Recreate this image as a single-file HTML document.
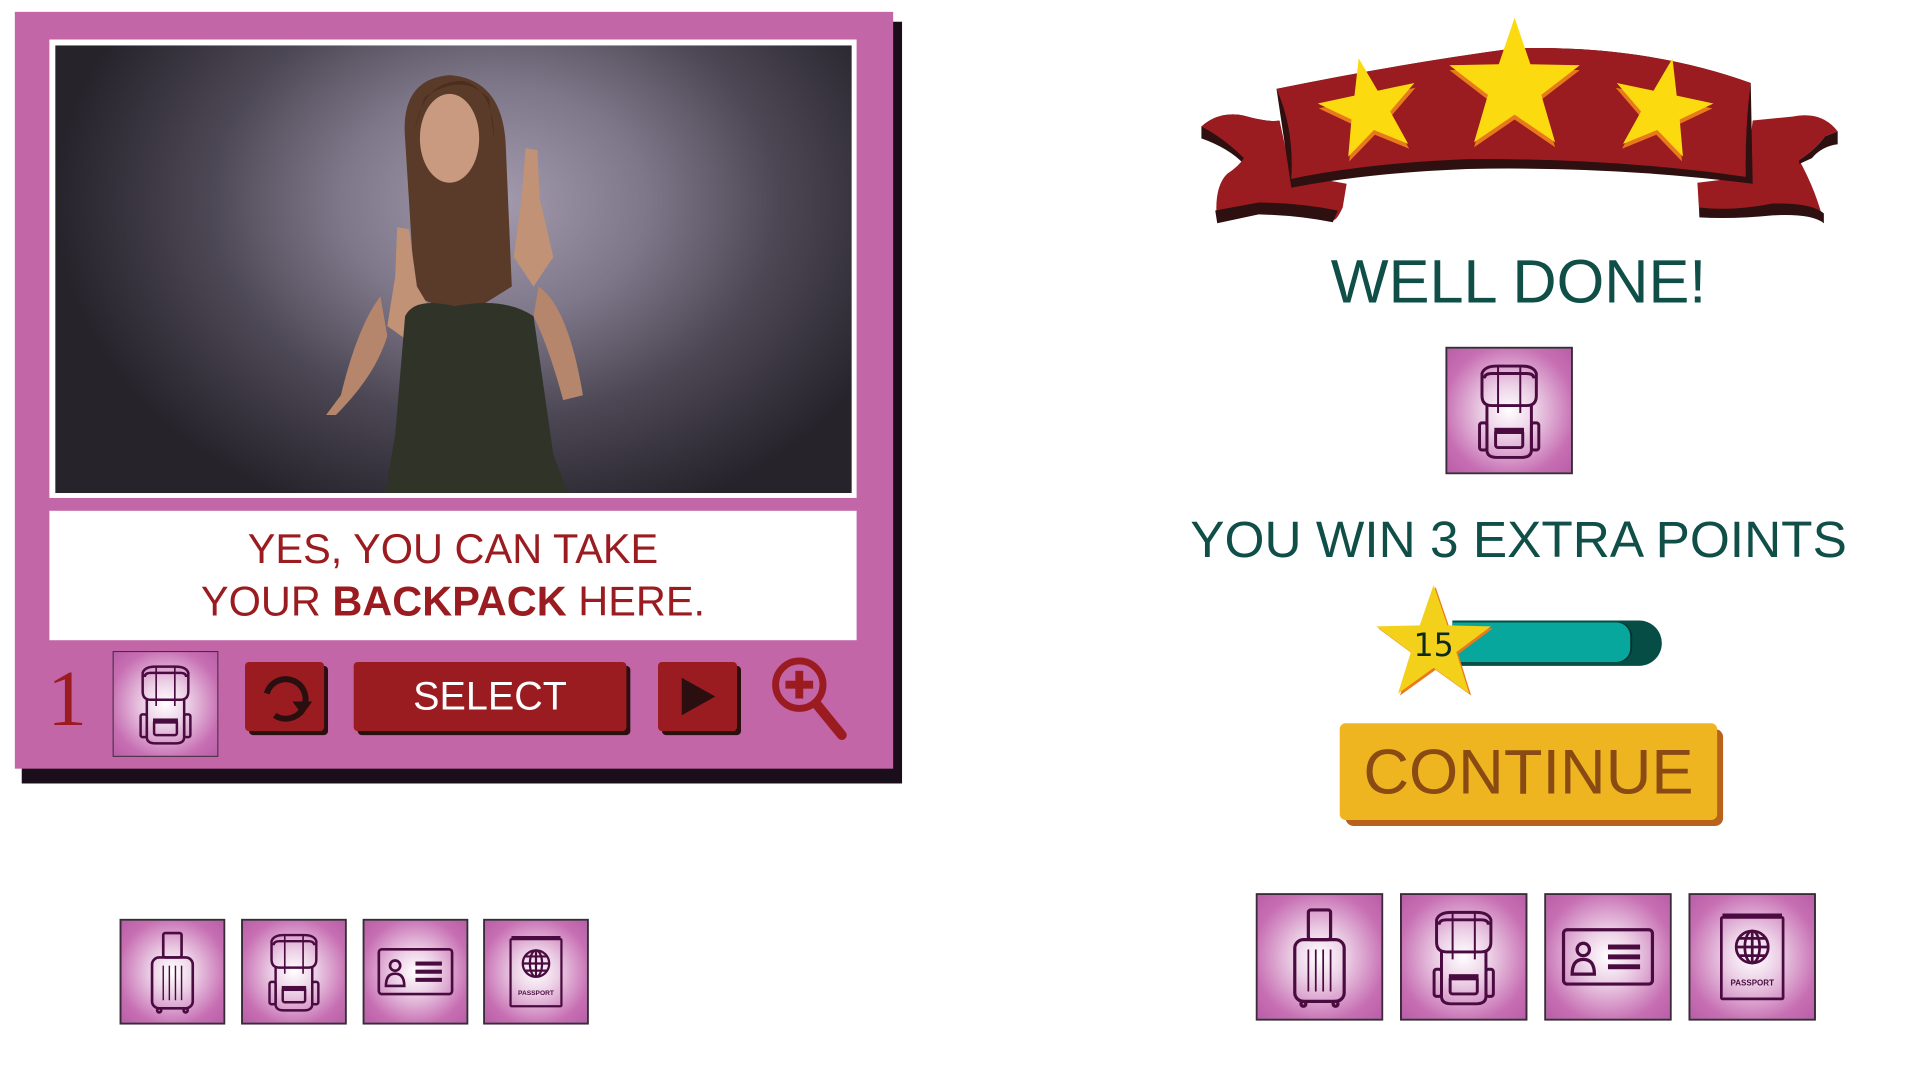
<!DOCTYPE html>
<html><head><meta charset="utf-8">
<style>
*{margin:0;padding:0;box-sizing:border-box}
html,body{width:1920px;height:1080px;overflow:hidden;background:#fff;font-family:"Liberation Sans","DejaVu Sans",sans-serif}
#w{position:absolute;left:0;top:0;width:1920px;height:1080px;transform:scale(0.988);transform-origin:0 0}
.abs{position:absolute}
.tile{position:absolute;background:radial-gradient(ellipse at 50% 50%,#ffffff 0%,#ecd0e6 30%,#c76fb3 75%,#b95ea8 100%);border:2px solid #3a2a3a}
.tile svg{width:100%;height:100%;display:block}
.btn{position:absolute;background:#9b1c20;border-radius:4px;box-shadow:4px 4px 0 #2b0f10}
</style></head><body>
<svg width="0" height="0" style="position:absolute">
<defs>
<symbol id="bag" viewBox="0 0 100 100">
 <g fill="none" stroke="#4a0c40" stroke-width="2.6">
 <rect x="41" y="12" width="18" height="24" rx="2"/>
 <rect x="30" y="36" width="40" height="50" rx="7"/>
 <line x1="41" y1="44" x2="41" y2="78" stroke-width="1.4"/><line x1="47" y1="44" x2="47" y2="78" stroke-width="1.4"/><line x1="53" y1="44" x2="53" y2="78" stroke-width="1.4"/><line x1="59" y1="44" x2="59" y2="78" stroke-width="1.4"/>
 <circle cx="37" cy="88" r="2"/><circle cx="63" cy="88" r="2"/></g>
</symbol>
<symbol id="pack" viewBox="0 0 100 100">
 <g fill="none" stroke="#4a0c40" stroke-width="2.4">
 <path d="M28 20 Q30 14 40 14 L60 14 Q70 14 72 20 L72 38 Q72 46 64 46 L36 46 Q28 46 28 38 Z"/>
 <path d="M30 24 Q30 20 36 20 L64 20 Q70 20 70 24"/>
 <path d="M32 46 L32 82 Q32 88 40 88 L60 88 Q68 88 68 82 L68 46"/>
 <rect x="26" y="60" width="6" height="22" rx="2"/><rect x="68" y="60" width="6" height="22" rx="2"/>
 <line x1="41" y1="14" x2="41" y2="52" stroke-width="1.6"/><line x1="59" y1="14" x2="59" y2="52" stroke-width="1.6"/>
 <rect x="39" y="66" width="22" height="14" rx="2"/></g>
 <rect x="38" y="64" width="24" height="5" fill="#4a0c40"/>
</symbol>
<symbol id="id" viewBox="0 0 100 100">
 <g fill="none" stroke="#4a0c40" stroke-width="2.6">
 <rect x="14" y="28" width="72" height="44" rx="3"/>
 <circle cx="30" cy="44" r="5"/><path d="M21 64 Q21 52 30 52 Q39 52 39 64 Z"/></g>
 <rect x="50" y="40" width="26" height="4" fill="#4a0c40"/><rect x="50" y="48" width="26" height="4" fill="#4a0c40"/><rect x="50" y="56" width="26" height="4" fill="#4a0c40"/>
</symbol>
<symbol id="pass" viewBox="0 0 100 100">
 <g fill="none" stroke="#4a0c40" stroke-width="2.2">
 <rect x="25" y="18" width="50" height="66" rx="1"/>
 <path d="M27 18 L27 16 L73 16 L73 18"/>
 <circle cx="50" cy="42" r="13"/><ellipse cx="50" cy="42" rx="6" ry="13"/><line x1="37" y1="42" x2="63" y2="42"/><line x1="39" y1="35" x2="61" y2="35"/><line x1="39" y1="49" x2="61" y2="49"/><line x1="50" y1="29" x2="50" y2="55"/></g>
 <text x="50" y="73" font-size="6.5" font-weight="bold" text-anchor="middle" fill="#4a0c40" font-family="Liberation Sans">PASSPORT</text>
</symbol>
</defs></svg>
<div id="w">
<div class="abs" style="left:22px;top:22px;width:891px;height:771px;background:#1a0e1a"></div>
<div class="abs" style="left:15px;top:12px;width:889px;height:766px;background:#c266a8"></div>
<div class="abs" style="left:50px;top:40px;width:817px;height:464px;background:#fff"></div>
<div class="abs" style="left:56px;top:46px;width:806px;height:453px;overflow:hidden;background:radial-gradient(ellipse 55% 75% at 55% 35%,#a49cae 0%,#7e7789 35%,#4c4754 65%,#26232b 100%)">
<svg width="806" height="453" viewBox="56 46 806 453">
 <path d="M410 140 Q405 80 455 76 Q510 80 512 150 L518 290 L470 320 L420 300 Z" fill="#5a3a28"/>
 <ellipse cx="455" cy="140" rx="30" ry="45" fill="#c99a80"/>
 <path d="M420 130 Q430 80 470 82 Q500 92 500 140 L495 100 Q470 72 430 98 Z" fill="#4a2e20"/>
 <path d="M385 300 Q362 330 345 400 L330 420 L340 420 Q380 380 392 340 Z" fill="#b5866c"/>
 <path d="M545 290 Q575 310 590 400 L570 405 Q555 350 540 320 Z" fill="#b5866c"/>
 <path d="M400 280 L402 230 L414 232 L422 290 L440 320 L420 350 L392 330 Z" fill="#c29276"/>
 <path d="M528 200 L532 150 L544 152 L546 200 L560 260 L540 290 L520 260 Z" fill="#c29276"/>
 <path d="M410 320 Q420 300 460 310 Q510 300 540 320 L560 460 L575 499 L390 499 L400 440 Z" fill="#2f3328"/>
</svg></div>
<div class="abs" style="left:50px;top:517px;width:817px;height:131px;background:#fff;color:#9b1c20;font-size:42px;text-align:center;line-height:53px;padding-top:12px">YES, YOU CAN TAKE<br>YOUR <b>BACKPACK</b> HERE.</div>
<div class="abs" style="left:48px;top:668px;color:#9b1c20;font-family:'Liberation Serif',serif;font-size:80px;line-height:80px">1</div>
<div class="tile" style="left:114px;top:659px;width:107px;height:107px;border-width:1.5px"><svg><use href="#pack"/></svg></div>
<div class="btn" style="left:248px;top:670px;width:80px;height:70px">
<svg width="80" height="70" viewBox="0 0 80 70"><path d="M50 20 A20 20 0 1 0 58 42" fill="none" stroke="#2b0f10" stroke-width="6" transform="rotate(180 40 37)"/><path d="M48 40 L68 40 L58 54 Z" fill="#2b0f10"/></svg></div>
<div class="btn" style="left:358px;top:670px;width:276px;height:70px;color:#fff;font-size:40px;text-align:center;line-height:70px">SELECT</div>
<div class="btn" style="left:666px;top:670px;width:80px;height:70px"><svg width="80" height="70"><path d="M24 16 L58 35 L24 54 Z" fill="#2b0f10"/></svg></div>
<svg class="abs" style="left:776px;top:660px" width="84" height="90" viewBox="0 0 84 90"><circle cx="33" cy="33" r="24" fill="none" stroke="#9b1c20" stroke-width="7"/><line x1="50" y1="52" x2="76" y2="84" stroke="#9b1c20" stroke-width="10" stroke-linecap="round"/><rect x="29" y="19" width="8" height="28" fill="#9b1c20"/><rect x="19" y="29" width="28" height="8" fill="#9b1c20"/></svg>

<div class="tile" style="left:121px;top:930px;width:107px;height:107px"><svg><use href="#bag"/></svg></div>
<div class="tile" style="left:244px;top:930px;width:107px;height:107px"><svg><use href="#pack"/></svg></div>
<div class="tile" style="left:367px;top:930px;width:107px;height:107px"><svg><use href="#id"/></svg></div>
<div class="tile" style="left:489px;top:930px;width:107px;height:107px"><svg><use href="#pass"/></svg></div>

<svg class="abs" style="left:1214px;top:0" width="700" height="250" viewBox="0 0 700 250">
 <path d="M2 128 Q20 112 45 117 Q70 124 81 122 L93 181 Q70 190 45 166 Q30 150 2 140 Z" fill="#2e1010"/>
 <path d="M2 128 Q20 112 45 117 Q70 124 81 122 L93 176 L149 186 L145 210 Q138 225 135 222 Q90 214 60 215 L18 225 Q14 190 28 176 Q40 168 45 160 Q25 140 2 128 Z" fill="#9b1c20"/>
 <path d="M16 213 L60 205 Q100 205 140 213 L135 225 Q100 218 60 217 L18 226 Z" fill="#2e1010"/>
 <path d="M646 133 Q630 112 600 118 L560 122 L553 179 L504 185 L506 218 Q540 222 580 214 Q620 212 632 226 Q625 195 607 162 Q625 150 633 138 Z" fill="#9b1c20"/>
 <path d="M646 133 L646 146 Q630 148 620 160 L607 166 L607 162 Q625 150 633 138 Z M506 210 Q540 214 580 206 Q620 205 632 216 L632 226 Q620 216 580 218 Q540 222 506 220 Z" fill="#2e1010"/>
 <path d="M78 90 Q200 65 318 49 Q450 45 558 84 L560 186 Q420 168 271 171 Q170 175 93 190 Z" fill="#2e1010"/>
 <path d="M78 90 Q200 65 318 49 Q450 45 558 84 Q552 130 553 179 Q420 160 271 161 Q170 165 93 181 Q96 130 78 90 Z" fill="#9b1c20"/>
 <g transform="translate(319,87)"><polygon points="0,-69 16,-22 66,-21 27,9 41,57 0,29 -41,57 -27,9 -66,-21 -16,-22" fill="#e87a1c" transform="translate(0,5)"/><polygon points="0,-69 16,-22 66,-21 27,9 41,57 0,29 -41,57 -27,9 -66,-21 -16,-22" fill="#fbda0f"/></g>
 <g transform="translate(172,110) rotate(-12)"><polygon points="0,-52 12,-16 50,-16 20,7 31,43 0,22 -31,43 -20,7 -50,-16 -12,-16" fill="#e87a1c" transform="translate(0,5)"/><polygon points="0,-52 12,-16 50,-16 20,7 31,43 0,22 -31,43 -20,7 -50,-16 -12,-16" fill="#fbda0f"/></g>
 <g transform="translate(468,110) rotate(12)"><polygon points="0,-52 12,-16 50,-16 20,7 31,43 0,22 -31,43 -20,7 -50,-16 -12,-16" fill="#e87a1c" transform="translate(0,5)"/><polygon points="0,-52 12,-16 50,-16 20,7 31,43 0,22 -31,43 -20,7 -50,-16 -12,-16" fill="#fbda0f"/></g>
</svg>

<div class="abs" style="left:1300px;top:246px;width:474px;text-align:center;color:#0f4f48;font-size:62px;line-height:80px">WELL DONE!</div>
<div class="tile" style="left:1463px;top:351px;width:129px;height:129px"><svg><use href="#pack"/></svg></div>
<div class="abs" style="left:1180px;top:512px;width:714px;text-align:center;color:#0f4f48;font-size:52px;line-height:70px;white-space:nowrap">YOU WIN 3 EXTRA POINTS</div>

<div class="abs" style="left:1470px;top:628px;width:212px;height:46px;background:#054d45;border-radius:0 24px 24px 0"></div>
<div class="abs" style="left:1470px;top:630px;width:180px;height:40px;background:#08a79d;border-radius:0 14px 14px 0;box-shadow:2px 0 0 #033"></div>
<svg class="abs" style="left:1381px;top:582px" width="140" height="125" viewBox="-70 -70 140 125">
 <polygon points="0,-60 14,-19 58,-18 23,8 36,50 0,24 -36,50 -23,8 -58,-18 -14,-19" fill="#e87a1c" transform="translate(2,2)"/>
 <polygon points="0,-60 14,-19 58,-18 23,8 36,50 0,24 -36,50 -23,8 -58,-18 -14,-19" fill="#f3d01a"/>
 <text x="0" y="12" font-size="32" text-anchor="middle" fill="#0d2a20" font-family="DejaVu Sans, sans-serif">15</text>
</svg>

<div class="abs" style="left:1362px;top:738px;width:382px;height:98px;background:#b8621e;border-radius:8px"></div>
<div class="abs" style="left:1356px;top:732px;width:382px;height:98px;background:#eeb520;border-radius:6px;color:#8a4a14;font-size:64px;line-height:98px;text-align:center">CONTINUE</div>

<div class="tile" style="left:1271px;top:904px;width:129px;height:129px"><svg><use href="#bag"/></svg></div>
<div class="tile" style="left:1417px;top:904px;width:129px;height:129px"><svg><use href="#pack"/></svg></div>
<div class="tile" style="left:1563px;top:904px;width:129px;height:129px"><svg><use href="#id"/></svg></div>
<div class="tile" style="left:1709px;top:904px;width:129px;height:129px"><svg><use href="#pass"/></svg></div>
</div>
</body></html>
